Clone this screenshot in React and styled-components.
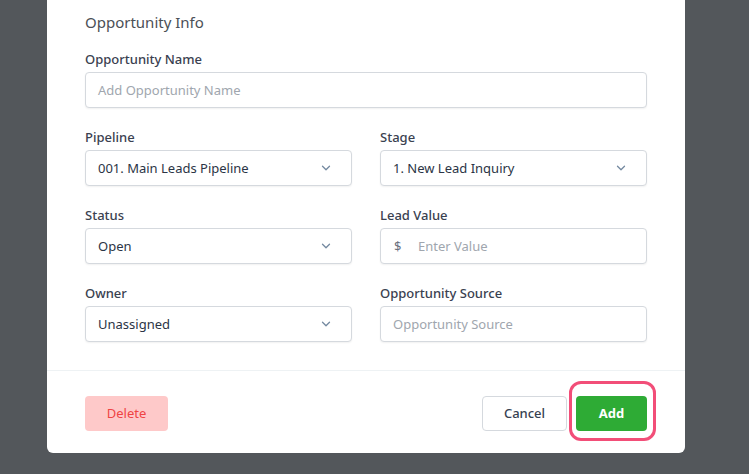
import styled, { createGlobalStyle } from "styled-components";

const GlobalStyle = createGlobalStyle`
  html, body {
    margin: 0;
    padding: 0;
    background: #53575b;
    font-family: "Noto Sans", "Open Sans", sans-serif;
  }
  * {
    box-sizing: border-box;
  }
`;

const Page = styled.div`
  width: 749px;
  height: 474px;
  overflow: hidden;
  background: #53575b;
`;

const Modal = styled.div`
  position: relative;
  margin-left: 47px;
  width: 638px;
  background: #ffffff;
  border-radius: 0 0 6px 6px;
`;

const Body = styled.div`
  padding: 12px 38px 28px;
`;

const Title = styled.h3`
  margin: 0 0 18px;
  font-size: 15px;
  line-height: 20px;
  font-weight: 400;
  color: #4b4f56;
`;

const Grid = styled.div`
  display: grid;
  grid-template-columns: 1fr 1fr;
  column-gap: 28px;
  row-gap: 20px;
`;

const Field = styled.div`
  display: flex;
  flex-direction: column;
  gap: 4px;
  grid-column: ${(p) => (p.$full ? "1 / -1" : "auto")};
`;

const Label = styled.label`
  font-size: 13px;
  line-height: 18px;
  font-weight: 500;
  color: #3a4150;
`;

const Box = styled.div`
  display: flex;
  align-items: center;
  height: 36px;
  padding: 0 20px 0 12px;
  border: 1px solid #d5d9de;
  border-radius: 4px;
  background: #ffffff;
  box-shadow: 0 1px 2px rgba(0, 0, 0, 0.06);
  font-size: 13px;
  color: ${(p) => (p.$placeholder ? "#a0a6ae" : "#2b3445")};
  justify-content: space-between;
`;

const Prefix = styled.span`
  color: #6b7280;
  width: 24px;
  margin-left: 1px;
`;

const Placeholder = styled.span`
  flex: 1;
  color: #a0a6ae;
`;

const Divider = styled.div`
  height: 1px;
  background: #eef2f4;
`;

const Footer = styled.div`
  display: flex;
  align-items: center;
  justify-content: space-between;
  padding: 25px 38px 22px;
`;

const Actions = styled.div`
  display: flex;
  gap: 9px;
`;

const Button = styled.button`
  height: 35px;
  padding: 0 0 2px;
  width: ${(p) => p.$w}px;
  border-radius: 4px;
  font-family: inherit;
  font-size: 13px;
  cursor: pointer;
  border: 1px solid
    ${(p) => (p.$variant === "outline" ? "#d5d9de" : "transparent")};
  background: ${(p) =>
    p.$variant === "danger"
      ? "#fec9c9"
      : p.$variant === "primary"
      ? "#2eab35"
      : "#ffffff"};
  color: ${(p) =>
    p.$variant === "danger"
      ? "#ef4444"
      : p.$variant === "primary"
      ? "#ffffff"
      : "#374151"};
  font-weight: ${(p) =>
    p.$variant === "primary" ? 700 : p.$variant === "danger" ? 400 : 500};
`;

const Highlight = styled.div`
  position: absolute;
  left: 522px;
  bottom: 12px;
  width: 87px;
  height: 60px;
  border: 3px solid #f24e78;
  border-radius: 12px;
  pointer-events: none;
`;

function Chevron() {
  return (
    <svg width="10" height="6" viewBox="0 0 10 6" fill="none">
      <path
        d="M1.5 1.2l3.5 3.5 3.5-3.5"
        stroke="#7489a0"
        strokeWidth="1.3"
        strokeLinecap="round"
        strokeLinejoin="round"
      />
    </svg>
  );
}

function SelectField({ label, value }) {
  return (
    <Field>
      <Label>{label}</Label>
      <Box>
        <span>{value}</span>
        <Chevron />
      </Box>
    </Field>
  );
}

function TextField({ label, placeholder, full }) {
  return (
    <Field $full={full}>
      <Label>{label}</Label>
      <Box $placeholder>{placeholder}</Box>
    </Field>
  );
}

export default function App() {
  return (
    <Page>
      <GlobalStyle />
      <Modal>
        <Body>
          <Title>Opportunity Info</Title>
          <Grid>
            <TextField
              full
              label="Opportunity Name"
              placeholder="Add Opportunity Name"
            />
            <SelectField label="Pipeline" value="001. Main Leads Pipeline" />
            <SelectField label="Stage" value="1. New Lead Inquiry" />
            <SelectField label="Status" value="Open" />
            <Field>
              <Label>Lead Value</Label>
              <Box>
                <Prefix>$</Prefix>
                <Placeholder>Enter Value</Placeholder>
              </Box>
            </Field>
            <SelectField label="Owner" value="Unassigned" />
            <TextField
              label="Opportunity Source"
              placeholder="Opportunity Source"
            />
          </Grid>
        </Body>
        <Divider />
        <Footer>
          <Button $variant="danger" $w={83}>
            Delete
          </Button>
          <Actions>
            <Button $variant="outline" $w={85}>
              Cancel
            </Button>
            <Button $variant="primary" $w={71}>
              Add
            </Button>
          </Actions>
        </Footer>
        <Highlight />
      </Modal>
    </Page>
  );
}
